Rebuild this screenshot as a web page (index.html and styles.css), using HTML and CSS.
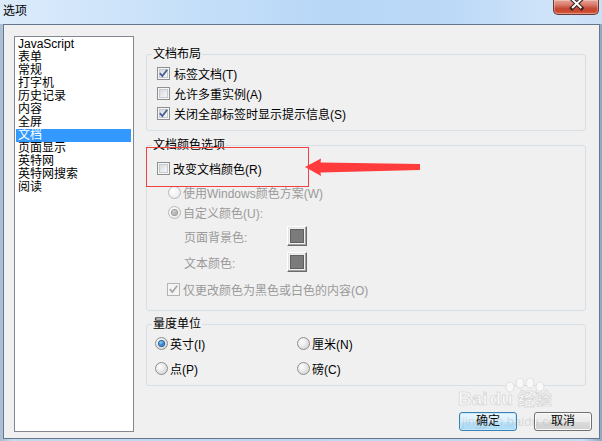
FILE: index.html
```html
<!DOCTYPE html>
<html lang="zh-CN">
<head>
<meta charset="utf-8">
<title>选项</title>
<link rel="stylesheet" href="styles.css">
</head>
<body>
<div class="window">
  <div class="titlebar">
    <span class="title">选项</span>
    <div class="close">
      <svg width="46" height="15" viewBox="0 0 46 15">
        <path d="M19.5 -1 L29 8 M29 -1 L19.5 8" stroke="#3b2320" stroke-width="4.2" stroke-linecap="square" fill="none"/>
        <path d="M19.5 -1 L29 8 M29 -1 L19.5 8" stroke="#ffffff" stroke-width="2" fill="none"/>
      </svg>
    </div>
  </div>
  <div class="client">
    <ul class="list">
      <li>JavaScript</li>
      <li>表单</li>
      <li>常规</li>
      <li>打字机</li>
      <li>历史记录</li>
      <li>内容</li>
      <li>全屏</li>
      <li class="sel">文档</li>
      <li>页面显示</li>
      <li>英特网</li>
      <li>英特网搜索</li>
      <li>阅读</li>
    </ul>
    <div class="panel">
      <fieldset class="group g1">
        <legend>文档布局</legend>
        <div class="row"><span class="cb"><svg width="11" height="11" viewBox="0 0 11 11"><path d="M1.8 5.2 L4.3 8 L9.2 1.8" class="tick"/></svg></span><span>标签文档(T)</span></div>
        <div class="row"><span class="cb"></span><span>允许多重实例(A)</span></div>
        <div class="row"><span class="cb"><svg width="11" height="11" viewBox="0 0 11 11"><path d="M1.8 5.2 L4.3 8 L9.2 1.8" class="tick"/></svg></span><span>关闭全部标签时显示提示信息(S)</span></div>
      </fieldset>
      <fieldset class="group g2">
        <legend>文档颜色选项</legend>
        <div class="row chg"><span class="cb"></span><span>改变文档颜色(R)</span></div>
        <div class="row rad dis first"><span class="rb dis"></span><span>使用Windows颜色方案(W)</span></div>
        <div class="row rad dis"><span class="rb dis on"></span><span>自定义颜色(U):</span></div>
        <div class="row crow c1"><span class="clabel">页面背景色:</span><span class="swatch"><span class="chip"></span></span></div>
        <div class="row crow c2"><span class="clabel">文本颜色:</span><span class="swatch"><span class="chip"></span></span></div>
        <div class="row only dis"><span class="cb dis"><svg width="11" height="11" viewBox="0 0 11 11"><path d="M1.8 5.2 L4.3 8 L9.2 1.8" class="tick"/></svg></span><span>仅更改颜色为黑色或白色的内容(O)</span></div>
      </fieldset>
      <fieldset class="group g3">
        <legend>量度单位</legend>
        <div class="units">
          <div class="row"><span class="rb on"></span><span>英寸(I)</span></div>
          <div class="row"><span class="rb"></span><span>厘米(N)</span></div>
          <div class="row"><span class="rb"></span><span>点(P)</span></div>
          <div class="row"><span class="rb"></span><span>磅(C)</span></div>
        </div>
      </fieldset>
      <div class="buttons">
        <button class="btn default">确定</button>
        <button class="btn">取消</button>
      </div>
    </div>
  </div>
  <svg class="annot" width="602" height="441" viewBox="0 0 602 441">
    <rect x="146.5" y="147.5" width="162" height="39" fill="none" stroke="#f04040" stroke-width="1"/>
    <polygon points="305,167 321,158.5 320.5,162.5 420,164 420,170 320.5,172.5 321,176" fill="#ff3b3b"/>
  </svg>
  <div class="watermark">
    <svg class="paw" width="50" height="16" viewBox="0 0 50 16">
      <ellipse cx="12" cy="9" rx="4" ry="5" />
      <ellipse cx="22" cy="5" rx="4" ry="5" />
      <ellipse cx="32" cy="5" rx="4" ry="5" />
      <ellipse cx="42" cy="9" rx="4" ry="5" />
    </svg>
    <div class="wm-logo"><span>Bai</span><span class="du">du</span><span class="jy">经验</span></div>
    <div class="wm-url">jingyan.baidu.com</div>
  </div>
</div>
</body>
</html>
```

FILE: styles.css
```css
* {
  box-sizing: border-box;
}

html,
body {
  margin: 0;
  padding: 0;
}

body {
  width: 602px;
  height: 441px;
  overflow: hidden;
  font-family: "Liberation Sans", "Noto Sans CJK SC", sans-serif;
  font-size: 12px;
  color: #000;
}

.window {
  position: relative;
  width: 602px;
  height: 441px;
  display: flex;
  flex-direction: column;
  background: linear-gradient(90deg, #a9bcd0 0%, #c4d9ee 2%, #bcd6f1 50%, #c6dcf2 97%, #8ea6c2 100%);
}

.titlebar {
  height: 24px;
  flex: none;
  display: flex;
  justify-content: space-between;
  align-items: flex-start;
  background: linear-gradient(90deg, #dcebfb 0%, #c6e0f9 30%, #b8d7f7 55%, #bcd9f7 75%, #d0e4f9 92%, #c9dff5 100%);
}

.title {
  padding: 2px 0 0 3px;
  line-height: 15px;
  font-size: 12px;
  font-family: "Noto Sans CJK SC", sans-serif;
}

.close {
  width: 46px;
  height: 15px;
  margin-right: 3px;
  border: 1px solid #6a3a33;
  border-top: none;
  border-radius: 0 0 5px 5px;
  background: linear-gradient(#e6a597 0%, #d9796a 35%, #c64a35 60%, #c9472f 80%, #d96a4c 100%);
  box-shadow: inset 0 0 0 1px rgba(255, 255, 255, 0.3);
  overflow: hidden;
  display: flex;
  justify-content: center;
}

.close svg {
  display: block;
  margin-left: -1px;
}

.client {
  flex: 1;
  margin: 0 2px 2px 3px;
  border: 1px solid #64778d;
  background: #f0f0f0;
  display: flex;
  align-items: stretch;
  gap: 12px;
  padding: 11px 12px 6px 10px;
}

.list {
  width: 120px;
  flex: none;
  margin: 0;
  padding: 1px;
  list-style: none;
  background: #fff;
  border: 1px solid #828790;
}

.list li {
  height: 13px;
  line-height: 13px;
  padding-left: 2px;
  margin-right: 1px;
  white-space: nowrap;
}

.list li.sel {
  background: #3399ff;
  color: #fff;
}

.panel {
  width: 440px;
  flex: none;
  padding-top: 11px;
  display: flex;
  flex-direction: column;
}

.group {
  margin: 0;
  min-width: 0;
  border: 1px solid #d5dfe5;
  border-radius: 3px;
  padding: 0 5px;
}

.group legend {
  padding: 0 1px;
  line-height: 14px;
  font-size: 12px;
}

.g1 {
  height: 84px;
  padding-top: 2px;
}

.g2 {
  height: 173px;
  margin-top: 7px;
  padding-top: 6px;
}

.g3 {
  height: 69px;
  margin-top: 6px;
  padding-top: 2px;
}

.row {
  display: flex;
  align-items: center;
  height: 20px;
  white-space: nowrap;
}

.dis {
  color: #9a9a9a;
}

/* checkbox */
.cb {
  width: 13px;
  height: 13px;
  flex: none;
  display: inline-flex;
  align-items: center;
  justify-content: center;
  border: 1px solid #8e8f8f;
  background: linear-gradient(135deg, #cdd1d6 0%, #eceef0 60%, #f8f8f8 100%);
  box-shadow: inset 0 0 0 1px #f6f6f6, inset 0 0 0 2px #c6cbd1;
}

.cb svg {
  display: block;
}

.tick {
  fill: none;
  stroke: #4a5f97;
  stroke-width: 1.8;
}

.cb.dis {
  border-color: #b4b4b4;
  background: #f4f4f4;
  box-shadow: none;
}

.cb.dis .tick {
  stroke: #a8a8a8;
}

.g1 .cb {
  margin-left: 5px;
  margin-right: 4px;
}

.chg .cb {
  margin-left: 5px;
  margin-right: 3px;
}

/* radio */
.rb {
  width: 13px;
  height: 13px;
  flex: none;
  border-radius: 50%;
  border: 1px solid #8e8f8f;
  background: radial-gradient(circle at 35% 35%, #ffffff 0%, #e8e8e8 45%, #c9c9c9 100%);
  display: inline-flex;
  align-items: center;
  justify-content: center;
}

.rb.on::after {
  content: "";
  width: 5px;
  height: 5px;
  border-radius: 50%;
  background: radial-gradient(circle at 40% 35%, #8fd2fb 0%, #2e8ad8 50%, #0b4f9a 100%);
  box-shadow: 0 0 0 1px #2c5f95;
}

.rb.dis {
  border-color: #b8b8b8;
  background: radial-gradient(circle at 35% 35%, #ffffff 0%, #f0f0f0 60%, #dedede 100%);
}

.rb.dis.on::after {
  background: radial-gradient(circle at 40% 35%, #cfcfcf 0%, #9a9a9a 100%);
  box-shadow: 0 0 0 1px #9a9a9a;
}

.rad .rb {
  margin-left: 16px;
  margin-right: 2px;
}

.rad.first {
  margin-top: 4px;
}

.crow .clabel {
  margin-left: 32px;
  width: 103px;
  color: #9a9a9a;
}

.c1 {
  margin-top: 4px;
}

.c2 {
  margin-top: 6px;
}

.swatch {
  width: 20px;
  height: 20px;
  flex: none;
  display: flex;
  align-items: center;
  justify-content: center;
  background: #f0f0f0;
  border: 1px solid;
  border-color: #ffffff #6b6b6b #6b6b6b #ffffff;
  box-shadow: inset -1px -1px 0 #a0a0a0, inset 1px 1px 0 #e3e3e3;
}

.chip {
  width: 14px;
  height: 14px;
  background: #7b7b7b;
  border: 1px solid #606060;
}

.only {
  margin-top: 7px;
}

.only .cb {
  margin-left: 15px;
  margin-right: 3px;
}

.units {
  display: grid;
  grid-template-columns: 142px 1fr;
  grid-auto-rows: 20px;
  row-gap: 5px;
  padding-left: 3px;
}

.units .rb {
  margin-right: 2px;
}

.buttons {
  display: flex;
  justify-content: flex-end;
  gap: 17px;
  margin-top: 26px;
  margin-right: -6px;
}

.btn {
  width: 58px;
  height: 19px;
  padding: 0;
  font-family: "Liberation Sans", "Noto Sans CJK SC", sans-serif;
  font-size: 12px;
  line-height: 17px;
  color: #000;
  border: 1px solid #707070;
  border-radius: 3px;
  background: linear-gradient(#f2f2f2 0%, #ebebeb 50%, #dddddd 51%, #cfcfcf 100%);
  box-shadow: inset 0 0 0 1px #fbfbfb;
}

.btn.default {
  border-color: #3c7fb1;
  background: linear-gradient(#eaf6fd 0%, #d9f0fc 50%, #bee6fd 51%, #a7d9f5 100%);
  box-shadow: inset 0 0 0 1px #c6e8fb;
}

.annot {
  position: absolute;
  left: 0;
  top: 0;
  pointer-events: none;
}

.watermark {
  position: absolute;
  left: 458px;
  top: 378px;
  width: 140px;
  pointer-events: none;
}

.paw {
  display: block;
  margin-left: 40px;
  fill: #f8f8f8;
  stroke: #d9d9d9;
  stroke-width: 0.8;
}

.wm-logo {
  display: flex;
  align-items: baseline;
  gap: 2px;
  margin-top: -6px;
  font-size: 19px;
  font-weight: bold;
  line-height: 20px;
  color: #f9f9f9;
  -webkit-text-stroke: 0.6px #cfcfcf;
}

.wm-logo .jy {
  margin-left: 3px;
  font-family: "Noto Sans CJK SC", sans-serif;
  font-size: 17px;
}

.wm-url {
  margin-top: 6px;
  margin-left: 4px;
  font-size: 13px;
  line-height: 14px;
  color: rgba(170, 170, 170, 0.35);
}
```
